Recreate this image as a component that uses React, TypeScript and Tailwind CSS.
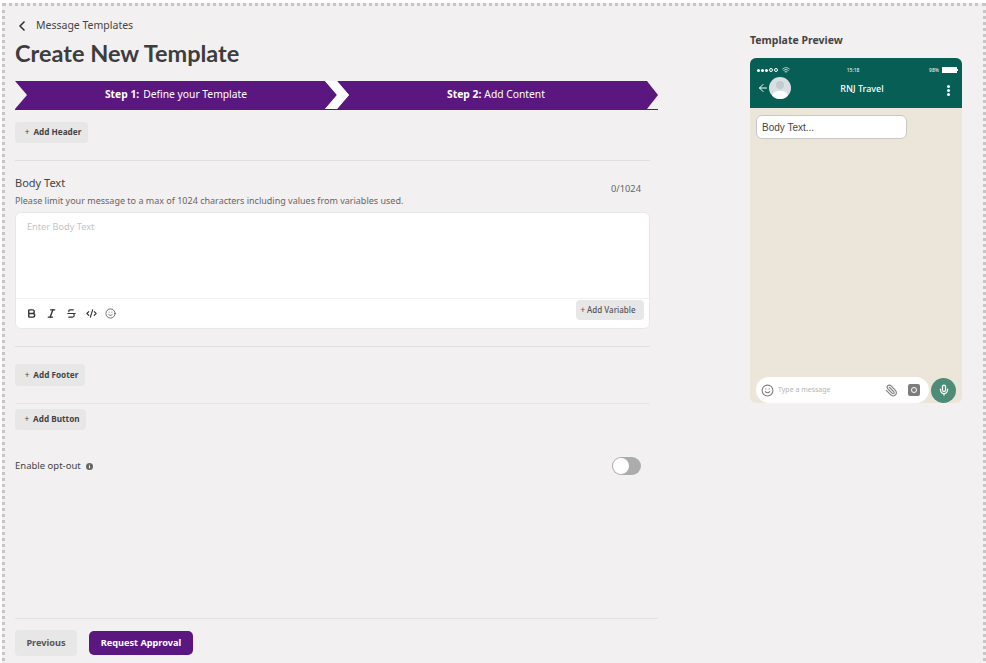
import { ChevronLeft, Bold, Italic, Strikethrough, CodeXml, Smile, Paperclip, Mic, ArrowLeft, Wifi } from 'lucide-react';

const font = { fontFamily: '"Noto Sans", sans-serif' };

function AddButton({ label, className }: { label: string; className: string }) {
  return (
    <button className={`flex items-center justify-center rounded-[4px] bg-[#e8e7e8] pl-[3px] text-[8.2px] font-bold text-[#444] ${className}`}>
      <span className="mr-[4px] font-normal">+</span>{label}
    </button>
  );
}

function Steps() {
  return (
    <div className="relative flex h-[29px] w-[643px]">
      <div className="flex h-[28px] w-[322px] items-center justify-center bg-[#5b1780] text-[10.3px] text-white [clip-path:polygon(0_0,310px_0,322px_50%,310px_100%,0_100%,12px_50%)]">
        <b className="mr-[4px]">Step 1:</b> Define your Template
      </div>
      <div className="flex h-[28px] w-[321px] items-center justify-center bg-[#5b1780] pr-[3px] text-[10.3px] text-white [clip-path:polygon(0_0,310px_0,321px_50%,310px_100%,0_100%,12px_50%)]">
        <b className="mr-[3px]">Step 2:</b> Add Content
      </div>
      <div className="absolute left-[310px] top-0 h-[28px] w-[24px] bg-white [clip-path:polygon(0_0,12px_0,24px_50%,12px_100%,0_100%,12px_50%)]" />
      <div className="absolute bottom-0 left-0 h-[1px] w-full bg-[#5b1780]" />
    </div>
  );
}

function Phone() {
  return (
    <div className="flex h-[345px] w-[212px] flex-col overflow-hidden rounded-[6px] bg-[#ebe5da]">
      <div className="h-[50px] shrink-0 bg-[#075e54] px-[7px] text-white">
        <div className="-mr-[3px] flex h-[16px] items-end justify-between text-[5px]">
          <div className="flex items-center gap-[1px]">
            <span className="h-[3px] w-[3px] rounded-full bg-white" />
            <span className="h-[3px] w-[3px] rounded-full bg-white" />
            <span className="h-[3px] w-[3px] rounded-full bg-white" />
            <span className="h-[4px] w-[4px] rounded-full border-[0.5px] border-white" />
            <span className="h-[4px] w-[4px] rounded-full border-[0.5px] border-white" />
            <Wifi size={8} className="ml-[3px]" />
          </div>
          <span className="mr-[13px]">15:18</span>
          <div className="flex items-center gap-[3px]">
            <span>98%</span>
            <span className="h-[6px] w-[15px] bg-white" />
            <span className="-ml-[3px] h-[2px] w-[1px] bg-white" />
          </div>
        </div>
        <div className="flex items-center pt-[3px]">
          <ArrowLeft size={12} strokeWidth={2} className="shrink-0" />
          <div className="relative h-[22px] w-[22px] shrink-0 overflow-hidden rounded-full bg-[#d9dfe3]">
            <span className="absolute left-[7px] top-[4px] h-[8px] w-[8px] rounded-full bg-[#c3cbd0]" />
            <span className="absolute left-[3px] top-[14px] h-[12px] w-[16px] rounded-full bg-white" />
          </div>
          <span className="ml-[48px] w-[46px] whitespace-nowrap pt-[2px] text-center text-[9px] font-medium">RNJ Travel</span>
          <div className="ml-auto mr-[5px] flex flex-col gap-[1px] pt-[5px]">
            <span className="h-[3px] w-[3px] rounded-full bg-white" />
            <span className="h-[3px] w-[3px] rounded-full bg-white" />
            <span className="h-[3px] w-[3px] rounded-full bg-white" />
          </div>
        </div>
      </div>
      <div className="flex-1 px-[6px] pt-[7px]">
        <div className="flex h-[24px] w-[151px] items-center rounded-[6px] border border-[#c9c7c5] bg-white px-[5px] text-[10px] text-[#444] [font-family:'Liberation_Sans',sans-serif]">
          Body Text...
        </div>
      </div>
      <div className="flex h-[26px] items-center pl-[6px]">
        <div className="flex h-[26px] w-[173px] items-center rounded-[13px] bg-white pl-[5px] pr-[9px]">
          <Smile size={13} className="text-[#7d7d7d]" />
          <span className="ml-[4px] flex-1 text-[7px] text-[#b5b5b5]">Type a message</span>
          <Paperclip size={13} className="mr-[10px] -scale-x-100 text-[#7d7d7d]" />
          <div className="flex h-[12px] w-[12px] items-center justify-center rounded-[2px] bg-[#7d7d7d]">
            <span className="h-[6px] w-[6px] rounded-full border border-white" />
          </div>
        </div>
        <div className="ml-[2px] flex h-[25px] w-[25px] items-center justify-center rounded-full bg-[#4e8c78]">
          <Mic size={12} strokeWidth={2.5} className="text-white" />
        </div>
      </div>
    </div>
  );
}

export default function App() {
  return (
    <div className="h-[663px] w-[986px] overflow-hidden bg-white pl-[2px] pt-[3px]" style={font}>
      <div className="flex h-[670px] border-[3px] border-dotted border-[#c6c6c6] bg-[#f2f0f1] pl-[10px]">
        <div className="w-[644px] shrink-0">
          <div className="flex h-[29px] items-center pl-[1px] pt-[10px] text-[10.5px] text-[#444]">
            <ChevronLeft size={16} strokeWidth={2.5} className="-ml-[2px] text-[#333]" />
            <span className="ml-[6px]">Message Templates</span>
          </div>
          <h1 className="h-[36px] text-[23.5px] font-bold leading-[36px] text-[#3d3d3d] [font-family:Lato,sans-serif]">Create New Template</h1>
          <div className="mt-[10px]"><Steps /></div>
          <AddButton label="Add Header" className="mt-[12px] h-[21px] w-[73px]" />

          <div className="w-[635px]">
            <div className="mt-[17px] border-t border-[#e0dfe0] pt-[15px]">
              <div className="flex items-end justify-between pr-[9px]">
                <div>
                  <div className="text-[11px] leading-[14px] text-[#444]">Body Text</div>
                  <div className="mt-[4px] text-[9px] leading-[13px] text-[#666]">Please limit your message to a max of 1024 characters including values from variables used.</div>
                </div>
                <span className="mb-[11px] text-[9.3px] text-[#666]">0/1024</span>
              </div>
            </div>
            <div className="mt-[5px] h-[117px] rounded-[6px] border border-[#e9e8e9] bg-white">
              <div className="h-[85px] px-[11px] pt-[6px] text-[9.2px] leading-[16px] text-[#c4c4c4]">Enter Body Text</div>
              <div className="flex h-[30px] items-center justify-between border-t border-[#f1f0f1] pl-[10px] pr-[5px]">
                <div className="flex items-center gap-[9px] text-[#333]">
                  <Bold size={11} strokeWidth={3} />
                  <Italic size={11} strokeWidth={3} />
                  <Strikethrough size={11} strokeWidth={2.5} />
                  <CodeXml size={11} strokeWidth={2.5} />
                  <Smile size={11} strokeWidth={1.5} className="-ml-[1px]" />
                </div>
                <button className="mb-[7px] flex h-[20px] w-[68px] items-center justify-center rounded-[4px] bg-[#e8e7e8] pr-[4px] text-[8px] font-medium text-[#555]">
                  + Add Variable
                </button>
              </div>
            </div>
            <div className="mt-[17px] border-t border-[#e0dfe0] pt-[17px]">
              <AddButton label="Add Footer" className="h-[22px] w-[70px]" />
            </div>
            <div className="mt-[17px] border-t border-[#e8e7e8] pt-[5px]">
              <AddButton label="Add Button" className="h-[21px] w-[71px]" />
            </div>
            <div className="mt-[27px] flex items-center justify-between pr-[9px]">
              <div className="flex items-center text-[9.5px] text-[#444]">
                Enable opt-out
                <svg viewBox="0 0 8 8" className="ml-[5px] h-[7px] w-[7px]">
                  <circle cx="4" cy="4" r="4" fill="#666" />
                  <path d="M4 3.5V6M4 2v.8" stroke="#fff" strokeWidth="1.2" />
                </svg>
              </div>
              <div className="relative h-[18px] w-[29px] rounded-full bg-[#acacac]">
                <span className="absolute left-[1px] top-[1px] h-[16px] w-[16px] rounded-full bg-white" />
              </div>
            </div>
          </div>

          <div className="mt-[143px] flex w-[643px] gap-[12px] border-t border-[#e4e3e4] pt-[11px]">
            <button className="h-[26px] w-[62px] rounded-[4px] bg-[#e8e7e8] text-[9.2px] font-bold text-[#555]">Previous</button>
            <button className="mt-[1px] h-[24px] w-[104px] rounded-[5px] bg-[#5b1780] text-[9.2px] font-bold text-white">Request Approval</button>
          </div>
        </div>
        <div className="ml-[91px] w-[212px] pt-[27px]">
          <div className="mb-[11px] text-[10.5px] font-bold leading-[14px] text-[#444]">Template Preview</div>
          <Phone />
        </div>
      </div>
    </div>
  );
}
